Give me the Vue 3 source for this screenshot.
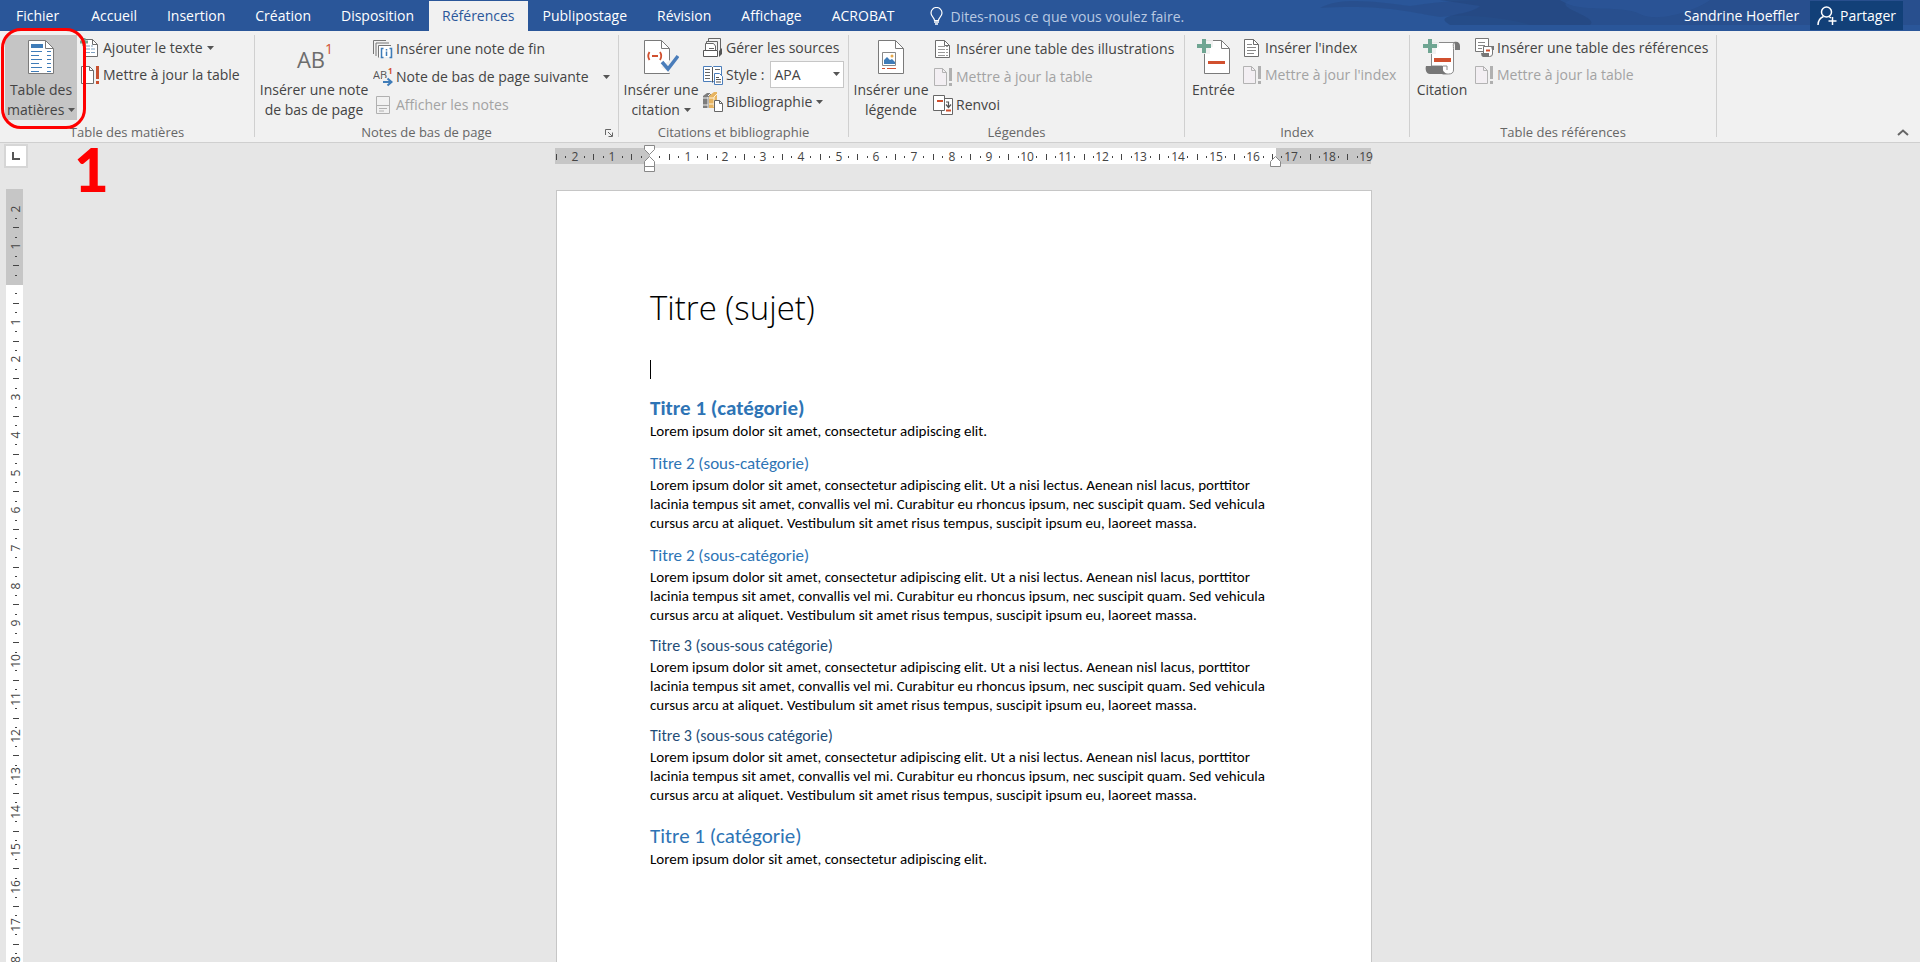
<script setup>
import { ref } from 'vue'

const CM = 37.7

const tabs = ['Fichier', 'Accueil', 'Insertion', 'Création', 'Disposition', 'Références', 'Publipostage', 'Révision', 'Affichage', 'ACROBAT']
const active = ref('Références')
const style = ref('APA')
const search = ref('')

// One entry per quarter centimetre: number on whole values, bar on halves, dot otherwise.
function ticks(from, to) {
  const list = []
  for (let q = from; q <= to; q++) {
    if (q === 0) continue
    const pos = Math.round((q / 4) * CM)
    if (q % 4 === 0) list.push({ q, pos, kind: 'num', label: Math.abs(q / 4) })
    else list.push({ q, pos, kind: q % 2 === 0 ? 'bar' : 'dot' })
  }
  return list
}
const hTicks = ticks(-10, 76)
const vTicks = ticks(-8, 72)

const shortText = 'Lorem ipsum dolor sit amet, consectetur adipiscing elit.'
const longText = 'Lorem ipsum dolor sit amet, consectetur adipiscing elit. Ut a nisi lectus. Aenean nisl lacus, porttitor lacinia tempus sit amet, convallis vel mi. Curabitur eu rhoncus ipsum, nec suscipit quam. Sed vehicula cursus arcu at aliquet. Vestibulum sit amet risus tempus, suscipit ipsum eu, laoreet massa.'
const sections = [
  { tag: 'h2', cls: 't1 strong', title: 'Titre 1 (catégorie)', body: shortText },
  { tag: 'h3', cls: 't2', title: 'Titre 2 (sous-catégorie)', body: longText },
  { tag: 'h3', cls: 't2', title: 'Titre 2 (sous-catégorie)', body: longText },
  { tag: 'h4', cls: 't3', title: 'Titre 3 (sous-sous catégorie)', body: longText },
  { tag: 'h4', cls: 't3', title: 'Titre 3 (sous-sous catégorie)', body: longText },
  { tag: 'h2', cls: 't1', title: 'Titre 1 (catégorie)', body: shortText },
]
</script>

<template>
  <div class="app">
    <svg class="defs" width="0" height="0" aria-hidden="true">
      <symbol id="page-big" viewBox="0 0 26 36">
        <path d="M.5 1.5h17l8 8v25h-25z" fill="#fff" stroke="#7a7a7a" />
        <path d="M17.500 1.500v8h8" fill="none" stroke="#7a7a7a" />
      </symbol>
      <symbol id="page-small" viewBox="0 0 20 20">
        <path d="M2.500 1.500h9l5 5v12h-14z" fill="#fff" stroke="#6d6d6d" />
        <path d="M11.500 1.500v5h5" fill="none" stroke="#6d6d6d" />
      </symbol>
      <symbol id="update-off" viewBox="0 0 20 20">
        <path d="M1.500 1.500h8l4 4v13h-12z" fill="#f3eff3" stroke="#b3b3b3" />
        <path d="M9.500 1.500v4h4" fill="none" stroke="#b3b3b3" />
        <path d="M16 1h3v13h-3zM16 16h3v3h-3z" fill="#b0b0b0" />
      </symbol>
      <symbol id="caret" viewBox="0 0 7 4"><path d="M0 0h7L3.500 4z" fill="#555" /></symbol>
      <symbol id="plus" viewBox="0 0 14 14"><path d="M5 0h4v5h5v4H9v5H5V9H0V5h5z" fill="#6fa592" /></symbol>
    </svg>

    <header class="tabbar">
      <svg class="art" viewBox="0 0 600 25" preserveAspectRatio="none" aria-hidden="true">
        <path d="M0 8C20-4 60 2 90 6c40-6 60-6 90-6h420v25H210c-20-6-60-12-90-8C90 12 60 4 0 8z" fill="#264b85" opacity=".55" />
        <path d="M130 25C110 14 150 16 160 6L120 0h130c-20 8 30 16 20 25z" fill="#23467d" opacity=".6" />
        <path d="M240 0c20 14 60 4 80 14s60-6 70-14z" fill="#2b579a" opacity=".6" />
      </svg>
      <nav class="tabs">
        <button v-for="t in tabs" :key="t" type="button" class="tab" :class="{ on: t === active }" @click="active = t">{{ t }}</button>
      </nav>
      <label class="tell">
        <svg width="13" height="18" viewBox="0 0 13 18" aria-hidden="true"><path d="M4.500 13.500c0-3-3.500-4-3.500-7.500a5.500 5.500 0 0 1 11 0c0 3.500-3.500 4.500-3.500 7.500z" fill="none" stroke="#fff" stroke-width="1.200" /><path d="M4 15h5M5 17h3" stroke="#fff" stroke-width="1.500" /></svg>
        <input v-model="search" type="text" placeholder="Dites-nous ce que vous voulez faire." aria-label="Recherche">
      </label>
      <span class="user">Sandrine Hoeffler</span>
      <button type="button" class="share">
        <svg width="20" height="20" viewBox="0 0 20 20" fill="none" stroke="#fff" stroke-width="1.500" aria-hidden="true"><circle cx="9.500" cy="6" r="5" /><path d="M1 19c0-4 2-7 5.500-8.500M12 10.500l2 1.500M15.500 11v8M11.500 15h8" /></svg>
        Partager
      </button>
    </header>

    <div class="ribbon">
      <section class="group g-toc">
        <div class="body">
          <button type="button" class="big pressed">
            <svg width="26" height="36" viewBox="0 0 26 36" aria-hidden="true">
              <use href="#page-big" />
              <path d="M3 5h12v4H3z" fill="#3f7cb8" />
              <path d="M3 12.500h11M3 16.500h8M3 20.500h11M3 24.500h8M3 28.500h11M3 32.500h8M19 12.500h4M19 16.500h4M19 20.500h4M19 24.500h4M19 28.500h4M19 32.500h4" stroke="#3f7cb8" />
            </svg>
            <span>Table des<br>matières <svg class="car" width="7" height="4"><use href="#caret" /></svg></span>
          </button>
          <div class="col">
            <button type="button" class="small">
              <svg width="20" height="20" viewBox="0 0 20 20" aria-hidden="true"><use href="#page-small" x="1" /><path d="M6 8h7M6 11h10M6 14.500h10" stroke="#7fa0c0" stroke-dasharray="4 1" /><path d="M4 0v8M0 4h8" stroke="#6fa592" stroke-width="3" /></svg>
              Ajouter le texte <svg class="car" width="7" height="4"><use href="#caret" /></svg>
            </button>
            <button type="button" class="small">
              <svg width="20" height="20" viewBox="0 0 20 20" aria-hidden="true"><path d="M1.500 1.500h8l4 4v13h-12z" fill="#fff" stroke="#6d6d6d" /><path d="M9.500 1.500v4h4" fill="none" stroke="#6d6d6d" /><path d="M16 1h3v13h-3zM16 16h3v3h-3z" fill="#c8502f" /></svg>
              Mettre à jour la table
            </button>
          </div>
        </div>
        <h2 class="label">Table des matières</h2>
      </section>

      <section class="group g-notes">
        <div class="body">
          <button type="button" class="big">
            <span class="ab">AB<span class="exp">1</span></span>
            <span>Insérer une note<br>de bas de page</span>
          </button>
          <div class="col loose">
            <button type="button" class="small">
              <svg width="20" height="20" viewBox="0 0 20 20" aria-hidden="true"><path d="M.5 15V1.500H13M3 17V4h13M5.500 18.500v-12H18" fill="none" stroke="#777" /><path d="M6 7h11v11H6z" fill="#fff" /><path d="M10.500 9.500h-2v9h2M16.500 9.500h2v9h-2M13.500 12.500V17M13.500 10v1.500" fill="none" stroke="#3f7cb8" stroke-width="1.500" /></svg>
              Insérer une note de fin
            </button>
            <button type="button" class="small">
              <svg width="20" height="20" viewBox="0 0 20 20" aria-hidden="true"><text x="0" y="12" class="g-ab">AB</text><text x="15" y="7" class="g-one">1</text><path d="M9 11h9v8H9z" fill="#f1f1f1" /><path d="M10 15h8M14.500 11.500l4 3.500-4 3.500" fill="none" stroke="#3f7cb8" stroke-width="2" /></svg>
              Note de bas de page suivante <svg class="car far" width="7" height="4"><use href="#caret" /></svg>
            </button>
            <button type="button" class="small" disabled>
              <svg width="20" height="20" viewBox="0 0 20 20" aria-hidden="true"><path d="M3.500 1.500h13v17h-13zM3.500 10.500h13M6 13.500h8M6 16h5" fill="none" stroke="#b0b0b0" /></svg>
              Afficher les notes
            </button>
          </div>
        </div>
        <h2 class="label">Notes de bas de page</h2>
        <button type="button" class="launch" aria-label="Options des notes"><svg width="8" height="8" viewBox="0 0 8 8" aria-hidden="true"><path d="M.5 6V.5H6M3 3l4 4M7.500 3.500v4h-4" fill="none" stroke="#666" /></svg></button>
      </section>

      <section class="group g-cite">
        <div class="body">
          <button type="button" class="big">
            <svg width="36" height="36" viewBox="0 0 36 36" aria-hidden="true">
              <use href="#page-big" x="1" width="26" height="36" />
              <path d="M18 28l10 7 8-14-4-4z" fill="#f1f1f1" />
              <path d="M6.500 13q-2.500 4 0 8M17 13q2.500 4 0 8M9 17h6" fill="none" stroke="#d1502f" stroke-width="1.800" />
              <path d="M19 23l6 7 10-13" fill="none" stroke="#4a7dba" stroke-width="3.500" />
            </svg>
            <span>Insérer une<br>citation <svg class="car" width="7" height="4"><use href="#caret" /></svg></span>
          </button>
          <div class="col">
            <button type="button" class="small">
              <svg width="20" height="20" viewBox="0 0 20 20" aria-hidden="true"><path d="M5.500 4V.5h12V12M3.500 7V3.500h11V12" fill="none" stroke="#666" /><path d="M2.500 5.500h8l2 2.500v5h-10z" fill="#fff" stroke="#666" /><path d="M6 10.500h5" stroke="#666" /><path d="M.5 12.500h14v6H.5z" fill="#fff" stroke="#555" /><path d="M16 13l3-3v6l-3 3z" fill="#555" /></svg>
              Gérer les sources
            </button>
            <div class="small field">
              <svg width="20" height="20" viewBox="0 0 20 20" aria-hidden="true"><path d="M.5 1.500h8l1 1 1-1h8v15h-8l-1 1-1-1h-8z" fill="#fff" stroke="#4a7dba" /><path d="M9.500 2v15" stroke="#555" /><path d="M2 4.500h5M2 7.500h5M2 10.500h5M2 13.500h5M12 4.500h5" stroke="#666" /><path d="M11.500 8.500h5l3 3v8h-8z" fill="#fff" stroke="#4a7dba" /><path d="M13 12.500h3M13 14.500h5M13 17h5" stroke="#555" /></svg>
              <label for="cite-style">Style :</label>
              <span class="pick">
                <select id="cite-style" v-model="style"><option>APA</option><option>MLA</option><option>Chicago</option></select>
                <svg class="pick-car" width="7" height="4"><use href="#caret" /></svg>
              </span>
            </div>
            <button type="button" class="small">
              <svg width="20" height="20" viewBox="0 0 20 20" aria-hidden="true"><path d="M0 4l4-3h4v14l-3 1H0z" fill="#7d7d7d" /><path d="M0 6h5M0 13h5M5 5v11M5 4l3-3" stroke="#f1f1f1" /><path d="M6 4l5-4h3v13l-3 3H6z" fill="#e7b461" /><path d="M6 6h5M6 12h5M11 5v10M11 5l3-3" stroke="#fff3dc" /><path d="M11.500 8.500h5l3 3v8h-8z" fill="#fff" stroke="#666" /><path d="M16.500 8.500v3h3" fill="none" stroke="#666" /></svg>
              Bibliographie <svg class="car" width="7" height="4"><use href="#caret" /></svg>
            </button>
          </div>
        </div>
        <h2 class="label">Citations et bibliographie</h2>
      </section>

      <section class="group g-captions">
        <div class="body">
          <button type="button" class="big">
            <svg width="26" height="36" viewBox="0 0 26 36" aria-hidden="true">
              <use href="#page-big" />
              <path d="M4.500 13.500h13v13h-13z" fill="#fff" stroke="#888" />
              <path d="M6 25v-4l3-3 3 3 2-1 3 3v2z" fill="#3f7cb8" /><circle cx="14" cy="17" r="1.500" fill="#e7a94a" />
              <path d="M4 29.500h3M9 29.500h9" stroke="#d1502f" />
            </svg>
            <span>Insérer une<br>légende</span>
          </button>
          <div class="col loose">
            <button type="button" class="small">
              <svg width="20" height="20" viewBox="0 0 20 20" aria-hidden="true"><use href="#page-small" /><path d="M5 7.500h7M5 10.500h7M5 13.500h7M5 16.500h7M13 7.500h2M13 10.500h2M13 13.500h2M13 16.500h2" stroke="#999" /></svg>
              Insérer une table des illustrations
            </button>
            <button type="button" class="small" disabled><svg width="20" height="20" aria-hidden="true"><use href="#update-off" /></svg>Mettre à jour la table</button>
            <button type="button" class="small">
              <svg width="20" height="20" viewBox="0 0 20 20" aria-hidden="true"><path d="M8.500 3.500h11v16h-11z" fill="#fff" stroke="#666" /><path d="M.5.5h11v15H.5z" fill="#fff" stroke="#666" /><path d="M4 6h6M13 15.500h5" stroke="#d1502f" stroke-width="2" /><path d="M13 7h2.500v5M13 9.500l2.500 3 2.500-3" fill="none" stroke="#555" stroke-width="1.200" /></svg>
              Renvoi
            </button>
          </div>
        </div>
        <h2 class="label">Légendes</h2>
      </section>

      <section class="group g-index">
        <div class="body">
          <button type="button" class="big">
            <svg width="34" height="36" viewBox="0 0 34 36" aria-hidden="true">
              <use href="#page-big" x="7" width="26" height="36" />
              <path d="M0 0h16v8h-3v7H7v-4H0z" fill="#f1f1f1" opacity=".9" />
              <use href="#plus" width="14" height="14" />
              <path d="M11 22h17v3H11z" fill="#d1502f" />
            </svg>
            <span>Entrée</span>
          </button>
          <div class="col">
            <button type="button" class="small">
              <svg width="20" height="20" viewBox="0 0 20 20" aria-hidden="true"><use href="#page-small" /><path d="M5 6.500h5M5 9.500h9M5 12.500h9M5 15.500h7" stroke="#888" /></svg>
              Insérer l'index
            </button>
            <button type="button" class="small" disabled><svg width="20" height="20" aria-hidden="true"><use href="#update-off" /></svg>Mettre à jour l'index</button>
          </div>
        </div>
        <h2 class="label">Index</h2>
      </section>

      <section class="group g-auth">
        <div class="body">
          <button type="button" class="big">
            <svg width="38" height="36" viewBox="0 0 38 36" aria-hidden="true">
              <path d="M8.500 27V3.500h23c-2 1-1 3-1 6V31q0 4-5 4h-6V27z" fill="#fff" stroke="#8a8a8a" />
              <path d="M31 3c4-1 6 1 6 4v4h-5V6z" fill="#777" />
              <path d="M3 27h17c-1 3 0 6 4 8H7c-4 0-5-5-4-8z" fill="#777" />
              <path d="M20 27h4v4" fill="none" stroke="#8a8a8a" />
              <path d="M0 0h16v8h-3v7H8v-4H0z" fill="#f1f1f1" opacity=".9" />
              <use href="#plus" width="14" height="14" />
              <path d="M11 19h17v4H11z" fill="#d1502f" />
            </svg>
            <span>Citation</span>
          </button>
          <div class="col">
            <button type="button" class="small">
              <svg width="20" height="20" viewBox="0 0 20 20" aria-hidden="true"><path d="M1.500.500h13v13h-13z" fill="#fff" stroke="#777" /><path d="M4 4.500h7M4 7.500h7M4 10.500h4" stroke="#888" /><path d="M9.500 17V8.500h9V16q0 2.500-3 2.500H9" fill="#fff" stroke="#777" /><path d="M17 8h3v4h-2zM7 15h8v4H9q-2-1-2-4z" fill="#777" /><path d="M12 12.500h4" stroke="#d1502f" stroke-width="2" /></svg>
              Insérer une table des références
            </button>
            <button type="button" class="small" disabled><svg width="20" height="20" aria-hidden="true"><use href="#update-off" /></svg>Mettre à jour la table</button>
          </div>
        </div>
        <h2 class="label">Table des références</h2>
      </section>

      <button type="button" class="collapse" aria-label="Réduire le ruban"><svg width="12" height="7" viewBox="0 0 12 7" aria-hidden="true"><path d="M1 6l5-4.500L11 6" fill="none" stroke="#666" stroke-width="2" /></svg></button>
    </div>

    <main class="work">
      <aside class="left">
        <button type="button" class="tabstop" aria-label="Taquet"><svg width="8" height="8" viewBox="0 0 8 8" aria-hidden="true"><path d="M1 0v7h7" fill="none" stroke="#555" stroke-width="2" /></svg></button>
        <div class="vwrap">
          <svg class="vruler" width="17" height="100%" aria-hidden="true">
            <rect width="17" height="100%" fill="#fff" /><rect width="17" height="96" fill="#c6c6c6" />
            <g transform="translate(0 95)">
              <template v-for="t in vTicks" :key="t.q">
                <text v-if="t.kind === 'num'" class="num" transform-origin="0 0" :transform="`translate(14 ${t.pos}) rotate(-90)`">{{ t.label }}</text>
                <rect v-else-if="t.kind === 'bar'" x="7" :y="t.pos" width="6" height="1" fill="#444" />
                <rect v-else x="9" :y="t.pos" width="2" height="1" fill="#444" />
              </template>
            </g>
          </svg>
        </div>
      </aside>
      <div class="pane">
        <svg class="hruler" width="816" height="28" viewBox="0 0 816 28" aria-hidden="true">
          <rect x="-1" y="3" width="816" height="16" fill="#c6c6c6" /><rect x="94" y="3" width="626" height="16" fill="#fff" />
          <g transform="translate(94 0)">
            <template v-for="t in hTicks" :key="t.q">
              <text v-if="t.kind === 'num'" class="num" :x="t.pos" y="16">{{ t.label }}</text>
              <rect v-else-if="t.kind === 'bar'" :x="t.pos" y="9" width="1" height="6" fill="#444" />
              <rect v-else :x="t.pos" y="11" width="1" height="2" fill="#444" />
            </template>
            <g fill="#fff" stroke="#888">
              <path d="M-5.500.500h10v4L-.5 9.500l-5-5z" /><path d="M-5.500 21.500v-5l5-5 5 5v5zM-5.500 21.500h10v5h-10z" />
              <path d="M620.500 21.500v-5l5-5 5 5v5z" />
            </g>
          </g>
        </svg>
        <article class="sheet">
          <h1>Titre (sujet)</h1>
          <div class="caret-line"><i class="cursor"></i></div>
          <template v-for="(s, i) in sections" :key="i">
            <component :is="s.tag" :class="s.cls">{{ s.title }}</component>
            <p>{{ s.body }}</p>
          </template>
        </article>
      </div>
    </main>

    <div class="mark" aria-hidden="true"></div>
    <strong class="step">1</strong>
  </div>
</template>

<style>
html, body { margin: 0; overflow: hidden; }
</style>

<style scoped>
.app { position: relative; display: flex; flex-direction: column; height: 100vh; overflow: hidden; background: #e6e6e6; color: #444; font: 14px/20px "Open Sans", "Noto Sans", sans-serif; }
.defs { position: absolute; }
button, input, select { font: inherit; color: inherit; border: 0; background: none; padding: 0; margin: 0; }
button { white-space: nowrap; }
h1, h2, h3, h4, p { margin: 0; }

.tabbar { position: relative; display: flex; flex: none; height: 31px; background: #2a5699; color: #fff; }
.art { position: absolute; right: 0; top: 0; width: 600px; height: 25px; }
.tabs { display: flex; padding-left: 1px; }
.tab { padding: 1px 15px 0; }
.tab:first-child { margin-right: 2px; }
.tab.on { margin-top: 1px; padding: 0 13px; background: #f1f1f1; color: #2b579a; }
.tell { display: flex; align-items: center; gap: 8px; margin-left: 20px; flex: 1; }
.tell input { flex: 1; min-width: 0; height: 31px; padding-top: 1px; box-sizing: border-box; outline: 0; }
.tell input::placeholder { color: #b9c9e2; opacity: 1; }
.user { position: relative; line-height: 32px; margin-right: 11px; }
.share { position: relative; display: flex; align-items: center; gap: 3px; height: 29px; margin: 1px 17px 0 0; padding: 0 7px; background: #124078; color: #fff; }

.ribbon { display: flex; flex: none; align-items: flex-start; height: 111px; border-bottom: 1px solid #cfcfcf; background: #f1f1f1; }
.group { position: relative; flex: none; box-sizing: border-box; height: 102px; margin-top: 4px; border-right: 1px solid #d0d0d0; }
.g-toc { width: 255px; }
.g-notes { width: 364px; }
.g-cite { width: 230px; }
.g-captions { width: 336px; }
.g-index { width: 225px; }
.g-auth { width: 307px; }
.body { display: flex; height: 85px; }
.label { margin-top: 4px; font-size: 13px; line-height: 16px; font-weight: 400; text-align: center; color: #666; }
.g-notes .label { padding-right: 20px; }
.launch { position: absolute; right: 5px; bottom: 0; line-height: 0; }

.big { display: flex; flex-direction: column; align-items: center; gap: 5px; height: 85px; padding-top: 4px; box-sizing: border-box; }
.g-toc .big { width: 72px; margin: 0 3px 0 5px; }
.pressed { background: #c5c5c5; }
.g-notes .big { width: 118px; }
.g-cite .big, .g-captions .big { width: 84px; }
.g-index .big { width: 57px; }
.g-auth .big { width: 64px; }
.big > svg, .small > svg:first-child { flex: none; }
.car { vertical-align: middle; margin-bottom: 2px; }
.small .car { margin: 0 0 0 1px; }
.small .car.far { margin-left: 11px; }
.ab { display: flex; align-items: flex-start; height: 36px; padding-left: 2px; font-size: 22px; line-height: 40px; color: #6d6d6d; }
.exp { font-size: 14px; line-height: 20px; color: #d1502f; }
.g-ab { font: 11px "Open Sans", sans-serif; fill: #555; }
.g-one { font: bold 8px "Open Sans", sans-serif; fill: #d1502f; }

.col { display: flex; flex-direction: column; margin-top: -1px; }
.col.loose { margin-top: 0; }
.small { display: flex; align-items: center; gap: 3px; height: 27px; white-space: nowrap; }
.loose .small { height: 28px; }
.small:disabled { color: #a3a3a3; }
.pick { position: relative; display: flex; margin-left: 3px; }
.pick select { width: 74px; height: 27px; padding: 0 3px; box-sizing: border-box; border: 1px solid #c6c6c6; border-radius: 0; background: #fff; appearance: none; }
.pick-car { position: absolute; right: 4px; top: 11px; }
.collapse { margin: 98px 11px 0 auto; line-height: 0; }

.work { display: grid; grid-template-columns: 26px minmax(0, 1fr) 18px; grid-template-rows: minmax(0, 1fr); flex: 1; min-height: 0; }
.left { display: flex; flex-direction: column; min-height: 0; }
.tabstop { display: grid; place-items: center; width: 24px; height: 24px; margin: 1px 0 0 4px; border: 2px solid #d6d6d6; background: #fff; box-sizing: border-box; }
.vwrap { flex: 1; min-height: 0; margin: 21px 0 0 6px; overflow: hidden; }
.vruler { display: block; }
.num { font: 12px "Open Sans", sans-serif; fill: #444; text-anchor: middle; }
.pane { display: flex; flex-direction: column; align-items: center; min-height: 0; overflow: hidden; padding-top: 2px; }
.hruler { flex: none; overflow: visible; }
.sheet { flex: none; width: 816px; min-height: 1156px; margin-top: 17px; padding: 94px 95px 93px 93px; box-sizing: border-box; border: 1px solid #c6c6c6; background: #fff; color: #000; font: 15px/19px Carlito, Lato, sans-serif; }
h1 { font: 300 33px/45px "Open Sans", sans-serif; }
.caret-line { height: 19px; margin-top: 30px; }
.cursor { display: block; width: 1px; height: 19px; background: #000; }
.t1 { margin: 18px 0 1px; font-size: 21px; line-height: 26px; font-weight: 400; color: #2e74b5; }
.strong { font-weight: 700; margin-top: 16px; }
.t2 { margin: 12px 0 1px; font-size: 17px; line-height: 22px; font-weight: 400; color: #2e74b5; }
.t3 { margin: 10px 0 1px; font-size: 16px; line-height: 22px; font-weight: 400; color: #1f4d78; }

.mark { position: absolute; left: 1px; top: 28px; width: 79px; height: 95px; border: 3px solid #f00; border-radius: 20px; pointer-events: none; }
.step { position: absolute; left: 74px; top: 133px; font: 900 60px/72px Lato, sans-serif; color: #f00; }
</style>
